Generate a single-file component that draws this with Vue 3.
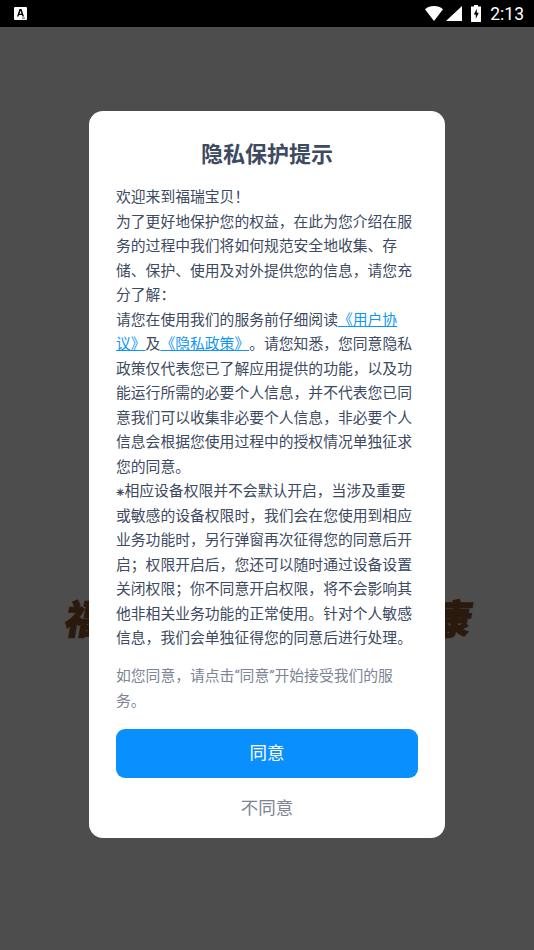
<template>
  <div class="page">
    <div class="status-bar">
      <div class="notify-icon">
        <svg width="13" height="13" viewBox="0 0 13 13">
          <rect width="13" height="13" rx="1" fill="#fff" />
          <path d="M3 9.500 5.500 2h2L10 9.500H8.500L8 8H5l-.5 1.500zM5.500 6.700h2l-1-3.100z" fill="#000" />
          <rect x="8" y="10.600" width="3" height="1" fill="#555" />
        </svg>
      </div>
      <div class="status-right">
        <svg class="wifi" width="18" height="15" viewBox="0 0 20 15" preserveAspectRatio="none">
          <path d="M0 3.200C2.700 1.100 6.200 0 10 0s7.300 1.100 10 3.200L10 15z" fill="#fff" />
        </svg>
        <svg class="signal" width="16" height="15" viewBox="0 0 15 15" preserveAspectRatio="none">
          <path d="M0 15 15 0v15z" fill="#fff" />
        </svg>
        <svg class="battery" width="10" height="17" viewBox="0 0 10 16" preserveAspectRatio="none">
          <path d="M3 0h4v1.500h3V16H0V1.500h3z" fill="#fff" />
          <path d="M5.800 3.500 2.800 9h2v4l3-5.800h-2z" fill="#000" />
        </svg>
        <span class="time">2:13</span>
      </div>
    </div>

    <div class="slogan">
      <span>福瑞宝贝</span>
      <span>呵护健康</span>
    </div>

    <div class="mask">
      <div class="dialog">
        <h2 class="title">隐私保护提示</h2>
        <div class="content">
          <p>欢迎来到福瑞宝贝！</p>
          <p>为了更好地保护您的权益，在此为您介绍在服务的过程中我们将如何规范安全地收集、存储、保护、使用及对外提供您的信息，请您充分了解：</p>
          <p>请您在使用我们的服务前仔细阅读<a class="link">《用户协议》</a>及<a class="link">《隐私政策》</a>。请您知悉，您同意隐私政策仅代表您已了解应用提供的功能，以及功能运行所需的必要个人信息，并不代表您已同意我们可以收集非必要个人信息，非必要个人信息会根据您使用过程中的授权情况单独征求您的同意。</p>
          <p>⁕相应设备权限并不会默认开启，当涉及重要或敏感的设备权限时，我们会在您使用到相应业务功能时，另行弹窗再次征得您的同意后开启；权限开启后，您还可以随时通过设备设置关闭权限；你不同意开启权限，将不会影响其他非相关业务功能的正常使用。针对个人敏感信息，我们会单独征得您的同意后进行处理。</p>
        </div>
        <p class="hint">如您同意，请点击“同意”开始接受我们的服务。</p>
        <button class="btn-agree">同意</button>
        <button class="btn-refuse">不同意</button>
      </div>
    </div>
  </div>
</template>

<script setup>
</script>

<style>
html,
body {
  margin: 0;
  background: #4d4d4d;
}
</style>

<style scoped>
.page {
  position: relative;
  height: 950px;
  overflow: hidden;
  background: #4d4d4d;
  font-family: "Noto Sans CJK SC", "Noto Sans", sans-serif;
  text-spacing-trim: space-all;
}

.status-bar {
  height: 27px;
  background: #000;
  display: flex;
  align-items: center;
  justify-content: space-between;
  padding: 0 10px 0 14px;
}

.notify-icon {
  display: flex;
}

.status-right {
  display: flex;
  align-items: center;
}

.signal {
  margin-left: 3px;
}

.battery {
  margin-left: 9px;
}

.time {
  margin-left: 9px;
  color: #fff;
  font-family: Roboto, sans-serif;
  font-size: 17.5px;
}

.slogan {
  display: flex;
  justify-content: space-between;
  margin: 565px 62px 0 66px;
  color: #2a1a0e;
  font-size: 40px;
  font-weight: 900;
  line-height: 50px;
  -webkit-text-stroke: 1px #2a1a0e;
}

.slogan span {
  display: inline-block;
  transform: skewX(-10deg);
}

.mask {
  position: absolute;
  inset: 0 0 1px;
  display: flex;
  align-items: center;
  justify-content: center;
}

.dialog {
  width: 356px;
  height: 727px;
  box-sizing: border-box;
  padding: 26px 27px 0;
  background: #fff;
  border-radius: 14px;
}

.title {
  margin: 0;
  text-align: center;
  color: #3d4a61;
  font-size: 22px;
  font-weight: 700;
  line-height: 30px;
}

.content {
  margin-top: 17px;
  color: #3d4a61;
  font-size: 14.8px;
  line-height: 24.5px;
}

.content p {
  margin: 0;
}

.link {
  color: #1296f3;
  text-decoration: underline;
}

.hint {
  margin: 14px 0 0;
  color: #7d8494;
  font-family: Roboto, "Noto Sans CJK SC", sans-serif;
  font-size: 14.8px;
  line-height: 25px;
}

.btn-agree {
  display: block;
  width: 100%;
  height: 49px;
  margin-top: 15px;
  padding: 0 0 4px;
  border: 0;
  border-radius: 9px;
  background: #0a8fff;
  color: #fff;
  font-family: inherit;
  font-size: 17.5px;
}

.btn-refuse {
  display: block;
  width: 100%;
  height: 30px;
  margin-top: 14px;
  padding: 0;
  border: 0;
  background: none;
  color: #7d8494;
  font-family: inherit;
  font-size: 17.5px;
}
</style>
